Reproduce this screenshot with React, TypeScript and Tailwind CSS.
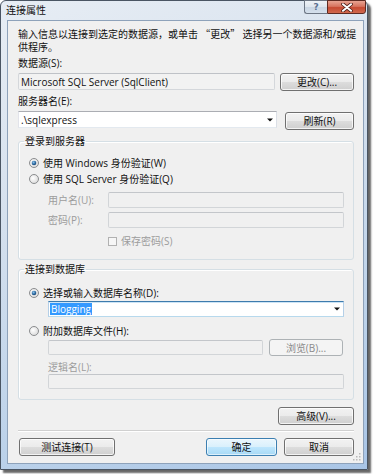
import React from "react";

type BtnKind = "normal" | "default" | "disabled";

const btnKinds: Record<BtnKind, string> = {
  normal:
    "border-[#707070] text-[#111] bg-[linear-gradient(to_bottom,#f2f2f2_0%,#ebebeb_50%,#dddddd_50%,#cfcfcf_100%)] shadow-[inset_0_0_0_1px_rgba(255,255,255,0.75)]",
  default:
    "border-[#3c7fb1] text-[#111] bg-[linear-gradient(to_bottom,#eaf6fd_0%,#d9f0fc_50%,#bee6fd_50%,#a7d9f5_100%)] shadow-[inset_0_0_0_1px_rgba(255,255,255,0.6)]",
  disabled: "border-[#adb2b5] text-[#8a8a8a] bg-[#f4f4f4]",
};

function Btn({
  children,
  kind = "normal",
  className = "",
}: {
  children: React.ReactNode;
  kind?: BtnKind;
  className?: string;
}) {
  return (
    <div
      className={`flex items-center justify-center rounded-[3px] border text-[10px] leading-none ${btnKinds[kind]} ${className}`}
    >
      {children}
    </div>
  );
}

function Radio({ checked }: { checked?: boolean }) {
  return (
    <svg width="10" height="10" viewBox="0 0 10 10" className="shrink-0">
      <defs>
        <radialGradient id={checked ? "rgc" : "rgu"} cx="0.4" cy="0.4" r="0.7">
          <stop offset="0" stopColor="#ffffff" />
          <stop offset="1" stopColor="#d6d6d6" />
        </radialGradient>
        <radialGradient id="dot" cx="0.4" cy="0.35" r="0.7">
          <stop offset="0" stopColor="#8fc3ea" />
          <stop offset="0.6" stopColor="#2a68a0" />
          <stop offset="1" stopColor="#173e66" />
        </radialGradient>
      </defs>
      <circle
        cx="5"
        cy="5"
        r="4.5"
        fill={checked ? "url(#rgc)" : "url(#rgu)"}
        stroke="#8a8c8e"
        strokeWidth="1"
      />
      {checked && <circle cx="5" cy="5" r="2.3" fill="url(#dot)" />}
    </svg>
  );
}

function Arrow() {
  return (
    <svg width="6" height="4" viewBox="0 0 6 4" className="shrink-0">
      <path d="M0 0.5 H6 L3 3.5 Z" fill="#111" />
    </svg>
  );
}

const disabledBox =
  "rounded-[2px] border border-[#d2d5d8] border-t-[#c3c6ca] bg-[#f0f0f0]";

export default function App() {
  return (
    <div className="h-[474px] w-[377px] overflow-hidden bg-white font-['Open_Sans','Noto_Sans_CJK_SC',sans-serif] text-[10px] text-[#111]">
      {/* window */}
      <div className="flex h-[470px] w-[368px] flex-col rounded-t-[6px] border border-[#4a5563] bg-[linear-gradient(160deg,#e7edf4_0%,#d6e1ee_35%,#bcd2ea_75%,#a9c5e6_100%)] pl-[6px] pr-[3px] pb-[5px] shadow-[3px_3px_2px_rgba(0,0,0,0.6)]">
        {/* title bar */}
        <div className="flex h-[19px] items-start justify-between">
          <div className="-ml-[1px] mt-[3px] leading-[13px] text-[#111]">
            连接属性
          </div>
          <div className="-mr-[2px] -mt-[1px] flex h-[14px]">
            <div className="flex w-[23px] items-center justify-center rounded-bl-[3px] border border-r-0 border-[#6d7684] bg-[linear-gradient(to_bottom,#eef2f7_0%,#dde5ee_50%,#c9d5e3_50%,#d5e0ec_100%)] font-['DejaVu_Sans',sans-serif] text-[9px] font-bold leading-none text-[#5a7090]">
              ?
            </div>
            <div className="flex w-[39px] items-center justify-center rounded-br-[3px] border border-[#5d2a22] bg-[linear-gradient(to_bottom,#e8a493_0%,#d7745f_45%,#c74a32_55%,#d0694e_100%)]">
              <svg width="12" height="9" viewBox="0 0 12 9">
                <path
                  d="M2 1.2 L10 7.8 M10 1.2 L2 7.8"
                  stroke="#4a1e18"
                  strokeWidth="3.6"
                  strokeLinecap="round"
                />
                <path
                  d="M2 1.2 L10 7.8 M10 1.2 L2 7.8"
                  stroke="#ffffff"
                  strokeWidth="2"
                  strokeLinecap="round"
                />
              </svg>
            </div>
          </div>
        </div>

        {/* client area */}
        <div className="relative flex h-[444px] w-[357px] flex-col border border-[#8ea2ba] bg-[#f0f0f0] pl-[10px] pr-[9px] pt-[6px]">
          <div className="whitespace-nowrap leading-[13px]">
            输入信息以连接到选定的数据源，或单击
            <span className="font-['Noto_Sans_CJK_SC',sans-serif]"> “</span>
            更改
            <span className="font-['Noto_Sans_CJK_SC',sans-serif]">” </span>
            选择另一个数据源和/或提
            <br />
            供程序。
          </div>

          <div className="mt-[3px] leading-[13px]">数据源(S):</div>
          <div className="mt-[3px] flex items-start justify-between">
            <div className="flex h-[17px] w-[257px] items-center rounded-[2px] border border-[#d4d7db] border-t-[#bfc2c7] bg-[#f2f2f2] pl-[2px] leading-none">
              Microsoft SQL Server (SqlClient)
            </div>
            <Btn className="h-[18px] w-[74px]">更改(C)...</Btn>
          </div>

          <div className="mt-[4px] leading-[13px]">服务器名(E):</div>
          <div className="mt-[3px] flex items-start justify-between">
            <div className="flex h-[17px] w-[259px] items-center justify-between border border-[#abadb3] border-b-[#e3e9ef] border-l-[#e2e3ea] border-r-[#dbdfe6] bg-white pl-[2px] pr-[3px] leading-none">
              <span>.\sqlexpress</span>
              <Arrow />
            </div>
            <Btn className="mt-[1px] h-[18px] w-[69px]">刷新(R)</Btn>
          </div>

          {/* group 1 */}
          <fieldset className="mt-[5px] rounded-[3px] border border-[#d5dfe5] pb-[11px] pt-[7px] shadow-[inset_1px_1px_0_#ffffff]">
            <legend className="ml-[5px] px-[1px] leading-[13px]">登录到服务器</legend>
            <div className="flex h-[16px] items-center gap-[4px] pl-[10px]">
              <Radio checked />
              <span>使用 Windows 身份验证(W)</span>
            </div>
            <div className="flex h-[16px] items-center gap-[4px] pl-[10px]">
              <Radio />
              <span>使用 SQL Server 身份验证(Q)</span>
            </div>
            <div className="mt-[5px] flex h-[16px] items-center pl-[29px]">
              <span className="w-[60px] text-[#9c9c9c]">用户名(U):</span>
              <div className={`h-[16px] w-[236px] ${disabledBox}`} />
            </div>
            <div className="mt-[4px] flex h-[16px] items-center pl-[29px]">
              <span className="w-[60px] text-[#9c9c9c]">密码(P):</span>
              <div className={`h-[16px] w-[236px] ${disabledBox}`} />
            </div>
            <div className="mt-[6px] flex h-[14px] items-center gap-[4px] pl-[89px]">
              <div className="h-[9px] w-[9px] border border-[#b1b1b1] bg-[#f6f6f6]" />
              <span className="text-[#9c9c9c]">保存密码(S)</span>
            </div>
          </fieldset>

          {/* group 2 */}
          <fieldset className="mt-[3px] rounded-[3px] border border-[#d5dfe5] pb-[10px] pt-[9px] shadow-[inset_1px_1px_0_#ffffff]">
            <legend className="ml-[5px] px-[1px] leading-[13px]">连接到数据库</legend>
            <div className="flex h-[16px] items-center gap-[4px] pl-[10px]">
              <Radio checked />
              <span>选择或输入数据库名称(D):</span>
            </div>
            <div className="pl-[29px]">
              <div className="flex h-[16px] w-[296px] items-center justify-between border border-[#3d7bad] border-b-[#b7d9ed] border-l-[#b5cfe7] border-r-[#b5cfe7] bg-white pl-[1px] pr-[3px] shadow-[inset_0_1px_0_#cde4f5]">
                <span className="bg-[#3399ff] px-[1px] leading-[12px] text-white">
                  Blogging
                </span>
                <Arrow />
              </div>
            </div>
            <div className="mt-[6px] flex h-[16px] items-center gap-[4px] pl-[10px]">
              <Radio />
              <span>附加数据库文件(H):</span>
            </div>
            <div className="flex items-start gap-[6px] pl-[29px]">
              <div className={`mt-[1px] h-[15px] w-[215px] ${disabledBox}`} />
              <Btn kind="disabled" className="h-[17px] w-[74px]">
                浏览(B)...
              </Btn>
            </div>
            <div className="mt-[5px] pl-[29px] leading-[13px] text-[#9c9c9c]">
              逻辑名(L):
            </div>
            <div className="pl-[29px]">
              <div className={`h-[15px] w-[296px] ${disabledBox}`} />
            </div>
          </fieldset>

          <div className="mt-[7px] flex justify-end">
            <Btn className="h-[18px] w-[76px]">高级(V)...</Btn>
          </div>

          <div className="mt-[5px] h-[2px] border-t border-b border-t-[#d0d0d0] border-b-white" />

          <div className="mt-[6px] flex items-start justify-between">
            <Btn className="ml-[1px] h-[18px] w-[96px]">测试连接(T)</Btn>
            <div className="flex gap-[7px]">
              <Btn kind="default" className="h-[18px] w-[71px]">
                确定
              </Btn>
              <Btn className="h-[18px] w-[70px]">取消</Btn>
            </div>
          </div>

          {/* resize grip */}
          <svg
            width="8"
            height="8"
            viewBox="0 0 8 8"
            className="absolute bottom-[2px] right-[2px]"
          >
            {[
              [6, 0],
              [6, 3],
              [3, 3],
              [6, 6],
              [3, 6],
              [0, 6],
            ].map(([x, y], i) => (
              <rect key={i} x={x} y={y} width="1.5" height="1.5" fill="#b8b8b8" />
            ))}
          </svg>
        </div>
      </div>
    </div>
  );
}
